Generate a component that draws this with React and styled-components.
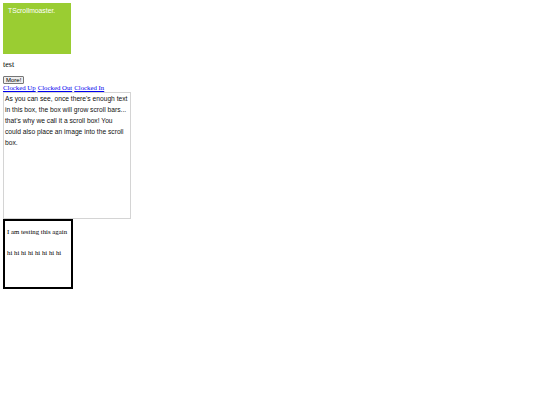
import React from "react";
import styled, { createGlobalStyle } from "styled-components";

const GlobalStyle = createGlobalStyle`
  body {
    margin: 3px;
    background: #ffffff;
    font-family: "Liberation Serif", "Times New Roman", serif;
    font-size: 7px;
    color: #000000;
  }
`;

const Banner = styled.div`
  width: 68px;
  height: 51px;
  box-sizing: border-box;
  padding: 4px 5px;
  background: #9acd32;
  color: #ffffff;
  font-family: "Liberation Sans", Arial, sans-serif;
  font-size: 6.8px;
`;

const Note = styled.p`
  margin: 6px 0 7px;
  font-size: 8px;
  line-height: 9px;
`;

const MoreButton = styled.button`
  display: block;
  height: 8px;
  padding: 0 2px;
  border: 1px solid #767676;
  border-radius: 1px;
  background: #efefef;
  font-family: "Liberation Sans", Arial, sans-serif;
  font-size: 6px;
  line-height: 6px;
  color: #000000;
`;

const LinkRow = styled.div`
  display: flex;
  gap: 2px;
  line-height: 8px;
`;

const NavLink = styled.a`
  color: #0000ee;
  text-decoration: underline;
  font-size: 6.8px;
`;

const ScrollBox = styled.div`
  width: 128px;
  height: 127px;
  box-sizing: border-box;
  overflow: auto;
  border: 1px solid #d4d4d4;
  padding: 0 0 0 1px;
  font-family: "Liberation Sans", Arial, sans-serif;
  font-size: 6.7px;
  line-height: 11px;
  color: #111111;
`;

const FramedBox = styled.div`
  width: 70px;
  height: 70px;
  box-sizing: border-box;
  border: 2px solid #000000;
  padding: 0 2px;
  font-size: 6.8px;
`;

const FramedLine = styled.p`
  margin: 6px 0 0;
  line-height: 10px;

  & + & {
    margin-top: 11px;
  }
`;

export default function App() {
  return (
    <>
      <GlobalStyle />
      <Banner>TScrollmoaster.</Banner>
      <Note>test</Note>
      <MoreButton>More!</MoreButton>
      <LinkRow>
        <NavLink href="#">Clocked Up</NavLink>
        <NavLink href="#">Clocked Out</NavLink>
        <NavLink href="#">Clocked In</NavLink>
      </LinkRow>
      <ScrollBox>
        As you can see, once there's enough text in this box, the box will
        grow scroll bars... that's why we call it a scroll box! You could also
        place an image into the scroll box.
      </ScrollBox>
      <FramedBox>
        <FramedLine>I am testing this again</FramedLine>
        <FramedLine>hi hi hi hi hi hi hi hi</FramedLine>
      </FramedBox>
    </>
  );
}
